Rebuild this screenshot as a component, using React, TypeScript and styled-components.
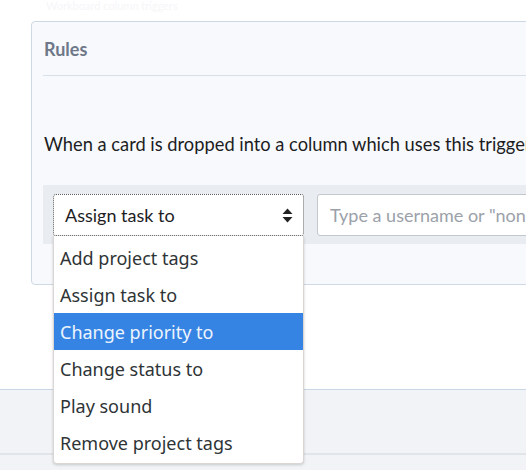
import React from 'react';
import styled, { createGlobalStyle } from 'styled-components';

const GlobalStyle = createGlobalStyle`
  html, body {
    margin: 0;
    padding: 0;
    background: #ffffff;
    overflow: hidden;
  }
  body {
    font-family: Lato, "Liberation Sans", sans-serif;
    color: #222;
  }
`;

const Page = styled.div`
  width: 526px;
  height: 470px;
  overflow: hidden;
  display: flex;
  flex-direction: column;
`;

const Ghost = styled.div`
  height: 21px;
  padding-left: 46px;
  font-size: 11px;
  line-height: 12px;
  color: #f5f6f8;
  white-space: nowrap;
`;

const Main = styled.div`
  padding: 0 0 104px 31px;
  flex: 0 0 auto;
`;

const Panel = styled.section`
  width: 640px;
  background: #f7f9fc;
  border: 1px solid #cfd9e5;
  border-radius: 4px;
  padding: 0 11px 40px;
`;

const PanelHeader = styled.h3`
  margin: 0;
  height: 53px;
  display: flex;
  align-items: center;
  padding-left: 1px;
  font-size: 18px;
  font-weight: 700;
  color: #6f7888;
  border-bottom: 1px solid #d6e0ea;
`;

const Lead = styled.p`
  margin: 56px 0 29px 1px;
  font-size: 18.3px;
  line-height: 24px;
  color: #1d1d1f;
  white-space: nowrap;
`;

const ActionBar = styled.div`
  background: #e9ecf1;
  padding: 9px 10px 8px;
  display: flex;
  gap: 13px;
`;

const SelectWrap = styled.div`
  position: relative;
  width: 251px;
  flex: 0 0 auto;
`;

const SelectBox = styled.div`
  height: 42px;
  box-sizing: border-box;
  background: #fff;
  border: 1px dotted #5a5a5a;
  border-radius: 3px;
  display: flex;
  align-items: center;
  justify-content: space-between;
  padding: 0 10px 0 11px;
  font-size: 18px;
  color: #1d1d1f;
`;

const TextInput = styled.div`
  width: 400px;
  height: 42px;
  box-sizing: border-box;
  background: #fff;
  border: 1px solid #c3c8cf;
  border-radius: 3px;
  display: flex;
  align-items: center;
  padding-left: 12px;
  font-size: 18px;
  color: #9ba1a9;
  white-space: nowrap;
`;

const Menu = styled.ul`
  position: absolute;
  top: 42px;
  left: 0;
  width: 251px;
  box-sizing: border-box;
  margin: 0;
  padding: 3px 0 2px;
  list-style: none;
  background: #fff;
  border: 1px solid #d9d6d3;
  border-top: none;
  border-radius: 0 0 4px 4px;
  box-shadow: 0 1px 3px rgba(0, 0, 0, 0.18);
  z-index: 10;
`;

const MenuItem = styled.li<{ $active?: boolean }>`
  height: 37px;
  display: flex;
  align-items: center;
  padding-left: 6px;
  font-family: "Noto Sans", "Open Sans", sans-serif;
  font-size: 18px;
  color: ${p => (p.$active ? '#eef4fd' : '#2e3436')};
  background: ${p => (p.$active ? '#3584e4' : 'transparent')};
  white-space: nowrap;
`;

const Footer = styled.div`
  flex: 1;
  background: #f1f3f6;
  border-top: 1px solid #c9d7e6;
  display: flex;
  flex-direction: column;
`;

const FooterBar = styled.div`
  height: 63px;
  border-bottom: 2px solid #e1e4e8;
`;

const SortIcon = () => (
  <svg width="11" height="15" viewBox="0 0 11 15">
    <path d="M5.5 0.5 L10.5 6 L0.5 6 Z" fill="#222" />
    <path d="M5.5 14.5 L10.5 9 L0.5 9 Z" fill="#222" />
  </svg>
);

const options = [
  'Add project tags',
  'Assign task to',
  'Change priority to',
  'Change status to',
  'Play sound',
  'Remove project tags',
];

const App: React.FC = () => {
  return (
    <>
      <GlobalStyle />
      <Page>
        <Ghost>Workboard column triggers</Ghost>
        <Main>
          <Panel>
            <PanelHeader>Rules</PanelHeader>
            <Lead>When a card is dropped into a column which uses this trigger:</Lead>
            <ActionBar>
              <SelectWrap>
                <SelectBox>
                  <span>Assign task to</span>
                  <SortIcon />
                </SelectBox>
                <Menu>
                  {options.map(o => (
                    <MenuItem key={o} $active={o === 'Change priority to'}>
                      {o}
                    </MenuItem>
                  ))}
                </Menu>
              </SelectWrap>
              <TextInput>Type a username or "none" to unassign.</TextInput>
            </ActionBar>
          </Panel>
        </Main>
        <Footer>
          <FooterBar />
        </Footer>
      </Page>
    </>
  );
};

export default App;
